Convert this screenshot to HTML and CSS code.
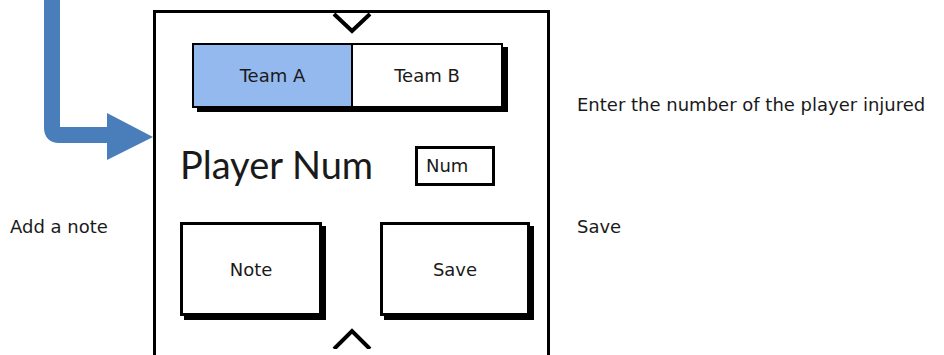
FILE: index.html
```html
<!DOCTYPE html>
<html lang="en">
<head>
    <meta charset="UTF-8">
    <title>Injury Wireframe</title>
    <link rel="stylesheet" href="styles.css">
</head>
<body>
    <div class="board">
        <div class="notes-left">
            <p class="note note-add">Add a note</p>
        </div>

        <div class="phone">
            <svg class="chevron chevron-down" width="40" height="22" viewBox="0 0 40 22">
                <polyline points="2,2 20,19 38,2" fill="none" stroke="#000" stroke-width="4" stroke-linejoin="miter"/>
            </svg>

            <div class="teams">
                <div class="team team-active">Team A</div>
                <div class="team">Team B</div>
            </div>

            <div class="player-row">
                <span class="player-label">Player Num</span>
                <div class="num-box">Num</div>
            </div>

            <div class="actions">
                <div class="action action-note">Note</div>
                <div class="action action-save">Save</div>
            </div>

            <svg class="chevron chevron-up" width="40" height="22" viewBox="0 0 40 22">
                <polyline points="2,22 20,4 38,22" fill="none" stroke="#000" stroke-width="4" stroke-linejoin="miter"/>
            </svg>
        </div>

        <div class="notes-right">
            <p class="note note-enter">Enter the number of the player injured</p>
            <p class="note note-save">Save</p>
        </div>

        <!-- connector arrow drawn over the board -->
        <svg class="arrow" width="160" height="165" viewBox="0 0 160 165">
            <path d="M52 0 V128 Q52 135 59 135 H110" fill="none" stroke="#4a7ebb" stroke-width="16"/>
            <polygon points="107,113 153,137 107,160" fill="#4a7ebb"/>
        </svg>
    </div>
</body>
</html>
```

FILE: styles.css
```css
body {
    margin: 0;
    background: #ffffff;
    font-family: 'DejaVu Sans', 'Open Sans', sans-serif;
    color: #1a1a1a;
}

.board {
    position: relative;
    display: flex;
    width: 944px;
    height: 355px;
    overflow: hidden;
}

.notes-left {
    width: 153px;
    flex-shrink: 0;
}

.note {
    margin: 0;
    font-size: 18px;
    line-height: 20px;
    white-space: nowrap;
}

.note-add {
    margin: 217px 0 0 10px;
}

.notes-right {
    padding-left: 27px;
}

.note-enter {
    margin-top: 95px;
}

.note-save {
    margin-top: 102px;
}

.phone {
    width: 397px;
    height: 360px;
    margin-top: 10px;
    border: 3px solid #000;
    border-bottom: 0;
    box-sizing: border-box;
    flex-shrink: 0;
}

.chevron {
    display: block;
    margin: 0 auto;
}

.chevron-down {
    margin-top: -1px;
}

.teams {
    display: grid;
    grid-template-columns: 159px 1fr;
    width: 311px;
    height: 65px;
    margin: 9px 0 0 36px;
    border: 2px solid #000;
    box-sizing: border-box;
    box-shadow: 5px 4px 0 #000;
}

.team {
    display: flex;
    align-items: center;
    justify-content: center;
    font-size: 18px;
    background: #fff;
}

.team-active {
    background: #93b9ef;
    border-right: 2px solid #000;
}

.player-row {
    display: flex;
    align-items: center;
    margin: 38px 0 0 24px;
    height: 40px;
}

.player-label {
    font-family: 'Lato', sans-serif;
    font-size: 38px;
    width: 235px;
    margin-top: -4px;
}

.num-box {
    width: 80px;
    height: 40px;
    box-sizing: border-box;
    border: 3px solid #000;
    font-size: 18px;
    line-height: 34px;
    padding-left: 8px;
}

.actions {
    display: flex;
    gap: 58px;
    margin: 36px 0 0 24px;
}

.action {
    display: flex;
    align-items: center;
    justify-content: center;
    height: 94px;
    border: 3px solid #000;
    box-sizing: border-box;
    box-shadow: 4px 4px 0 #000;
    font-size: 18px;
}

.action-note {
    width: 142px;
}

.action-save {
    width: 150px;
}

.chevron-up {
    margin-top: 11px;
}

.arrow {
    position: absolute;
    left: 0;
    top: 0;
}
```
